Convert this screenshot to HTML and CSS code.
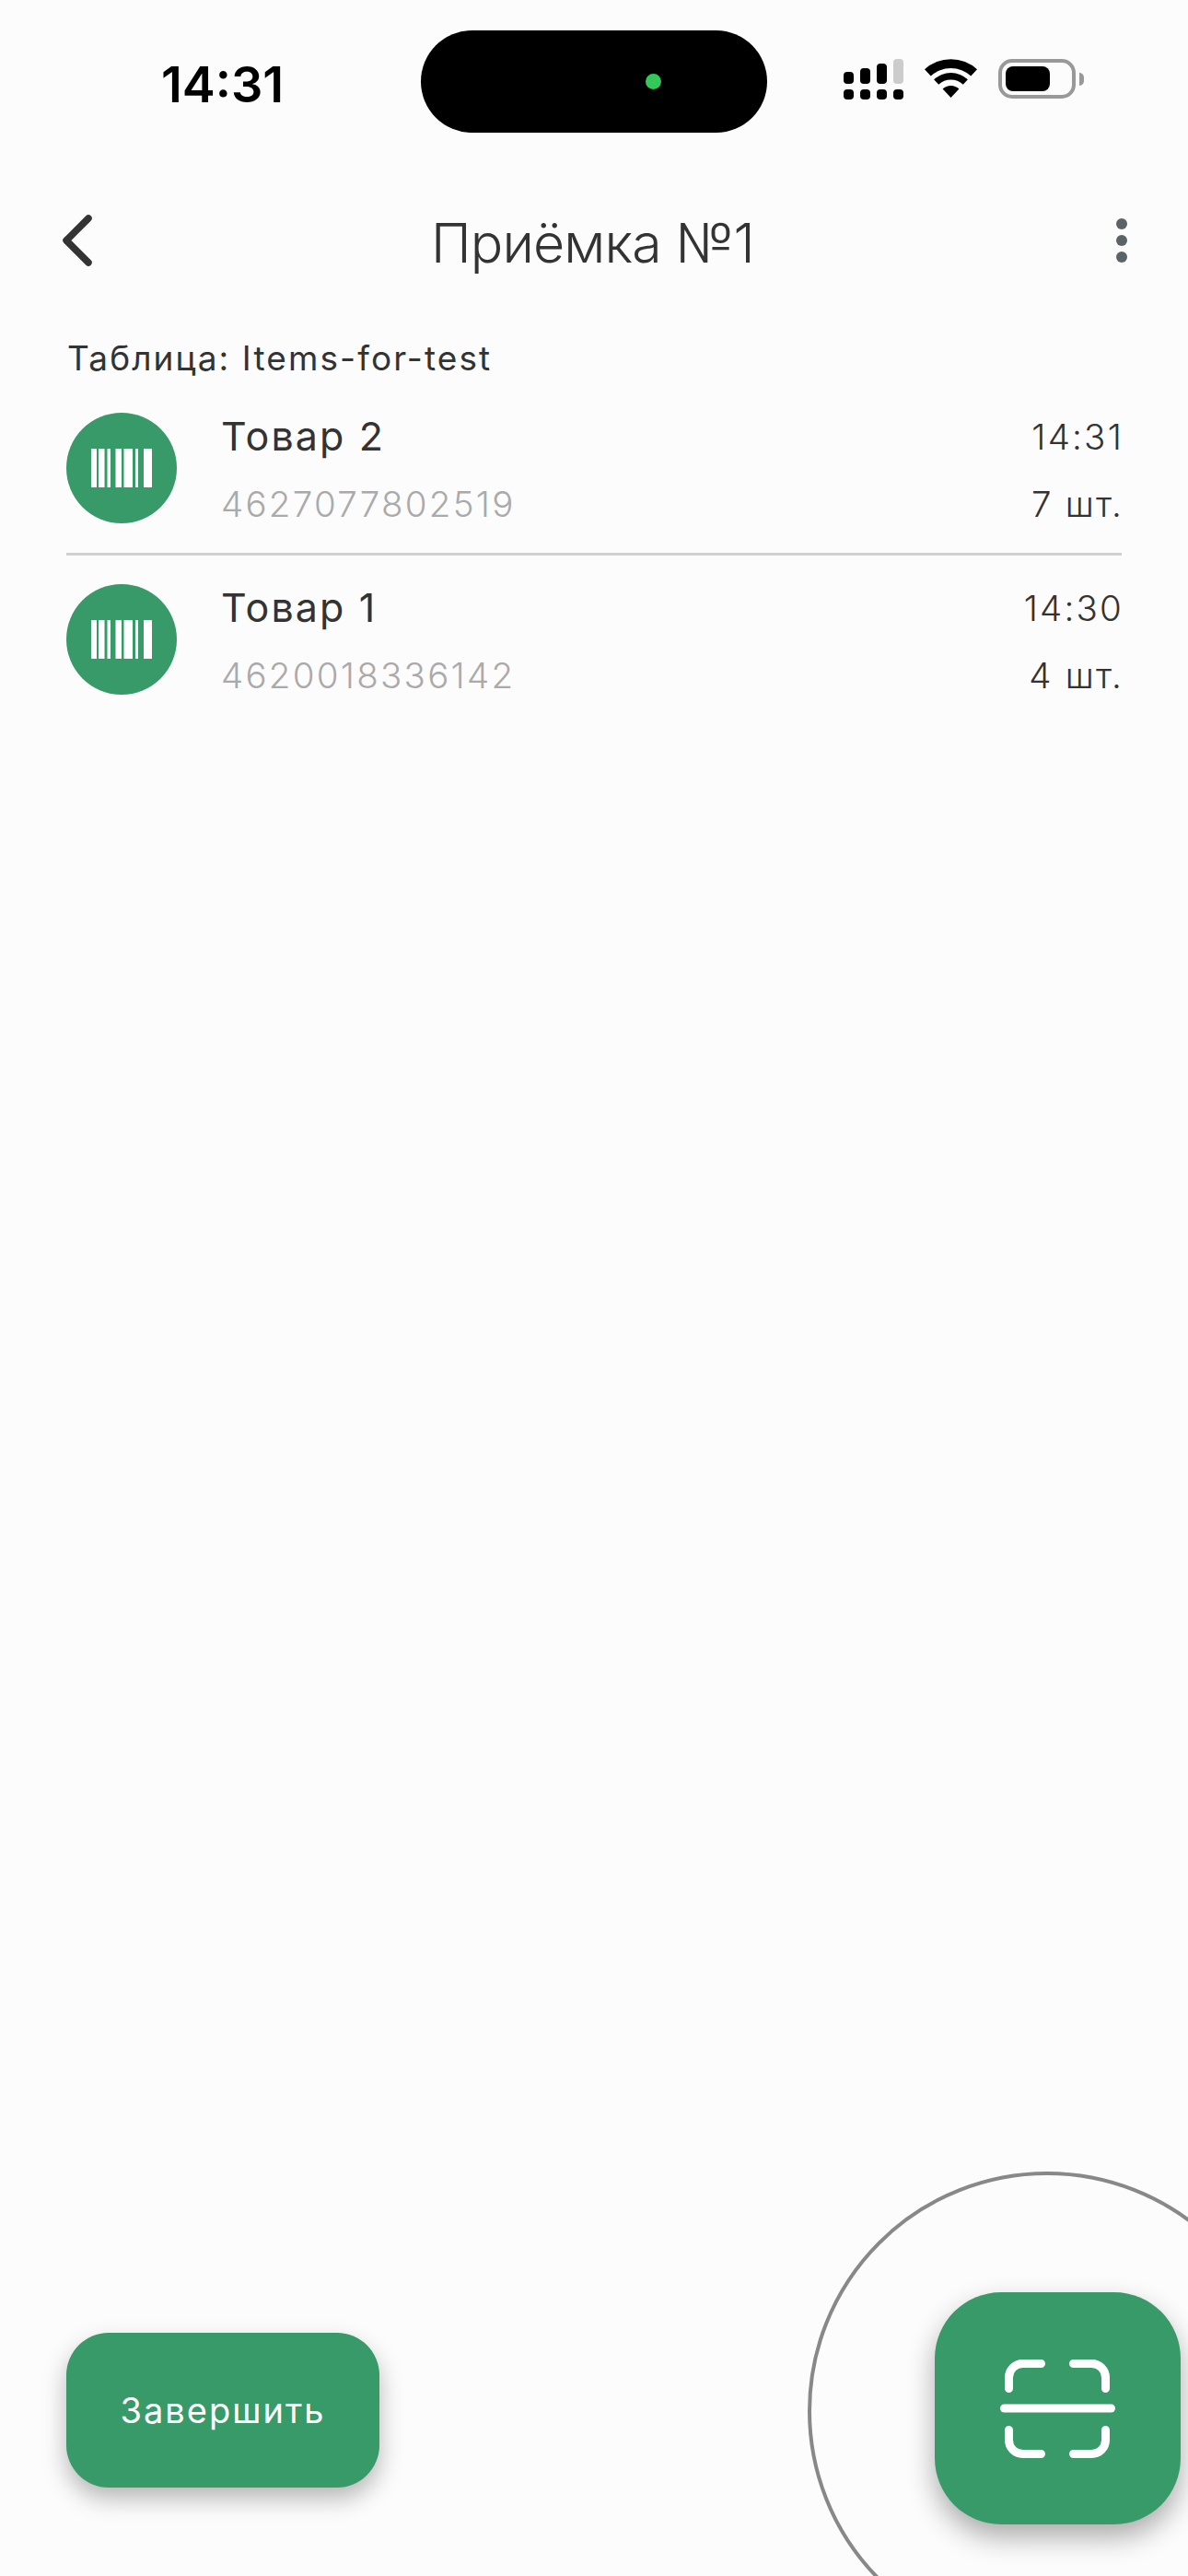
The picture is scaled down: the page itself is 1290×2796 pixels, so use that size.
FILE: index.html
```html
<!DOCTYPE html>
<html lang="ru">
<head>
<meta charset="UTF-8" />
<meta name="viewport" content="width=device-width, initial-scale=1" />
<title>Приёмка №1</title>
<link rel="stylesheet" href="styles.css">
</head>
<body>
<div class="screen">

    <div class="status-bar">
        <div class="status-time">14:31</div>
        <div class="island"><span class="island-dot"></span></div>
        <div class="status-icons">
            <svg class="signal" width="65" height="44" viewBox="0 0 65 44" aria-hidden="true">
                <rect x="0" y="14" width="11" height="13" rx="4" fill="#000"/>
                <rect x="18" y="10" width="11" height="17" rx="4" fill="#000"/>
                <rect x="36" y="5" width="11" height="22" rx="4" fill="#000"/>
                <rect x="54" y="0" width="11" height="27" rx="4" fill="#ccc"/>
                <rect x="0" y="33" width="11" height="11" rx="4" fill="#000"/>
                <rect x="18" y="33" width="11" height="11" rx="4" fill="#000"/>
                <rect x="36" y="33" width="11" height="11" rx="4" fill="#000"/>
                <rect x="54" y="33" width="11" height="11" rx="4" fill="#000"/>
            </svg>
            <svg class="wifi" width="57" height="42" viewBox="0 0 57 42" aria-hidden="true">
                <path d="M0 11.3A42 42 0 0 1 57 11.3L50.3 18.6A32 32 0 0 0 6.7 18.6Z" fill="#000"/>
                <path d="M10.1 22.3A27 27 0 0 1 46.9 22.3L41.8 27.7A19.5 19.5 0 0 0 15.2 27.7Z" fill="#000"/>
                <path d="M19.6 32.5A13 13 0 0 1 37.4 32.5L28.5 42Z" fill="#000"/>
            </svg>
            <div class="battery">
                <div class="battery-body"><div class="battery-level"></div></div>
                <div class="battery-nub"></div>
            </div>
        </div>
    </div>

    <div class="app-header">
        <svg class="back-icon" width="32" height="56" viewBox="0 0 32 56" aria-hidden="true">
            <path d="M28 4 L4 28 L28 52" fill="none" stroke="#333" stroke-width="7.5" stroke-linecap="round" stroke-linejoin="round"/>
        </svg>
        <h1 class="app-title">Приёмка №1</h1>
        <div class="more-dots"><span></span><span></span><span></span></div>
    </div>

    <div class="table-name">Таблица: Items-for-test</div>

    <div class="item-list">
        <div class="item">
            <div class="item-badge">
                <svg width="66" height="42" viewBox="0 0 66 42" aria-hidden="true">
                    <path d="M0 0h6v42H0zM8 0h6.5v42H8zM17.5 0h3.5v42h-3.5zM26.5 0h6.5v42h-6.5zM35.5 0h9.5v42h-9.5zM48 0h3v42h-3zM57 0h9v42h-9z" fill="#fff"/>
                </svg>
            </div>
            <div class="item-info">
                <div class="item-name">Товар 2</div>
                <div class="item-code">4627077802519</div>
            </div>
            <div class="item-meta">
                <div>14:31</div>
                <div>7 шт.</div>
            </div>
        </div>
        <div class="item">
            <div class="item-badge">
                <svg width="66" height="42" viewBox="0 0 66 42" aria-hidden="true">
                    <path d="M0 0h6v42H0zM8 0h6.5v42H8zM17.5 0h3.5v42h-3.5zM26.5 0h6.5v42h-6.5zM35.5 0h9.5v42h-9.5zM48 0h3v42h-3zM57 0h9v42h-9z" fill="#fff"/>
                </svg>
            </div>
            <div class="item-info">
                <div class="item-name">Товар 1</div>
                <div class="item-code">4620018336142</div>
            </div>
            <div class="item-meta">
                <div>14:30</div>
                <div>4 шт.</div>
            </div>
        </div>
    </div>

    <div class="bottom-bar">
        <button class="finish-btn">Завершить</button>
        <button class="scan-btn" aria-label="Сканировать">
            <svg width="125" height="107" viewBox="0 0 125 107" aria-hidden="true">
                <g fill="none" stroke="#fff" stroke-width="9" stroke-linecap="round">
                    <path d="M9.5 31.5V19.5A15 15 0 0 1 24.5 4.5H44.5"/>
                    <path d="M79.5 4.5H99.5A15 15 0 0 1 114.5 19.5V31.5"/>
                    <path d="M4.5 53H120.5"/>
                    <path d="M9.5 76.5V87.5A15 15 0 0 0 24.5 102.5H44.5"/>
                    <path d="M79.5 102.5H99.5A15 15 0 0 0 114.5 87.5V76.5"/>
                </g>
            </svg>
        </button>
    </div>

    <div class="scan-ring"></div>
</div>
</body>
</html>
```

FILE: styles.css
```css
* {
    box-sizing: border-box;
}
body {
    margin: 0;
    background: #fcfcfc;
    font-family: Inter, "Noto Sans", sans-serif;
    color: #333;
}
.screen {
    position: relative;
    display: flex;
    flex-direction: column;
    width: 1290px;
    height: 2796px;
    overflow: hidden;
    background: #fcfcfc;
}

/* status bar */
.status-bar {
    display: grid;
    grid-template-columns: 457px 376px 1fr;
    height: 111px;
    margin-top: 33px;
}
.status-time {
    padding: 26px 0 0 175px;
    font-size: 54px;
    line-height: 65px;
    font-weight: 600;
    color: #000;
}
.island {
    display: flex;
    align-items: center;
    justify-content: center;
    padding-left: 129px;
    background: #000;
    border-radius: 56px;
}
.island-dot {
    width: 17px;
    height: 17px;
    border-radius: 50%;
    background: #34c759;
}
.status-icons {
    display: flex;
    align-items: flex-start;
    padding: 31px 0 0 83px;
}
.wifi {
    margin-left: 23px;
}
.battery {
    display: flex;
    align-items: center;
    margin-left: 23px;
}
.battery-body {
    width: 84px;
    height: 43px;
    padding: 4px;
    border: 4px solid #999;
    border-radius: 15px;
}
.battery-level {
    width: 48px;
    height: 27px;
    border-radius: 8px;
    background: #000;
}
.battery-nub {
    width: 5px;
    height: 14px;
    margin-left: 4px;
    border-radius: 0 5px 5px 0;
    background: #999;
}

/* header */
.app-header {
    display: grid;
    grid-template-columns: 1fr auto 1fr;
    align-items: center;
    height: 70px;
    margin-top: 82px;
    padding: 0 66px;
}
.back-icon {
    display: block;
    margin-left: 2px;
}
.app-title {
    margin: 0 3px 0 0;
    padding-top: 5px;
    font-size: 59px;
    line-height: 65px;
    font-weight: 300;
    letter-spacing: -0.9px;
    color: #333;
}
.more-dots {
    display: flex;
    flex-direction: column;
    gap: 6px;
    justify-self: end;
}
.more-dots span {
    width: 12px;
    height: 12px;
    border-radius: 50%;
    background: #5a6468;
}

/* list */
.table-name {
    margin-top: 71px;
    padding: 0 73px;
    font-size: 37px;
    line-height: 44px;
    letter-spacing: 2.1px;
}
.item-list {
    margin-top: 37px;
    padding: 0 72px;
}
.item {
    display: flex;
    height: 152px;
    margin-bottom: 34px;
}
.item:first-child {
    border-bottom: 3px solid #d0d0d0;
    height: 155px;
    margin-bottom: 31px;
}
.item-badge {
    display: flex;
    align-items: center;
    justify-content: center;
    flex: none;
    width: 120px;
    height: 120px;
    border-radius: 50%;
    background: #389a69;
}
.item-info {
    flex: 1;
    margin-left: 48px;
}
.item-name {
    font-size: 43px;
    line-height: 50px;
    letter-spacing: 2.1px;
    font-weight: 400;
}
.item-code {
    margin-top: 26px;
    font-size: 38.5px;
    line-height: 46px;
    font-weight: 300;
    letter-spacing: 2.25px;
    color: #aaa;
}
.item-meta {
    display: flex;
    flex-direction: column;
    gap: 21px;
    margin-right: -2px;
    font-size: 38.5px;
    line-height: 52px;
    font-weight: 300;
    letter-spacing: 2.2px;
    text-align: right;
}

/* bottom buttons */
.bottom-bar {
    display: flex;
    align-items: flex-end;
    justify-content: space-between;
    margin-top: auto;
    padding: 0 8px 56px 72px;
}
.finish-btn {
    width: 340px;
    height: 168px;
    margin-bottom: 40px;
    border: none;
    border-radius: 46px;
    background: #389a69;
    box-shadow: 0 12px 26px rgba(0,0,0,0.28);
    font-family: inherit;
    font-size: 38px;
    letter-spacing: 2px;
    color: #fff;
}
.scan-btn {
    display: flex;
    align-items: center;
    justify-content: center;
    width: 267px;
    height: 252px;
    padding: 0;
    border: none;
    border-radius: 72px;
    background: #389a69;
    box-shadow: 0 14px 30px rgba(0,0,0,0.32);
}
.scan-ring {
    position: absolute;
    left: 877px;
    top: 2357px;
    width: 520px;
    height: 520px;
    border: 4px solid #888;
    border-radius: 50%;
    pointer-events: none;
}
```
